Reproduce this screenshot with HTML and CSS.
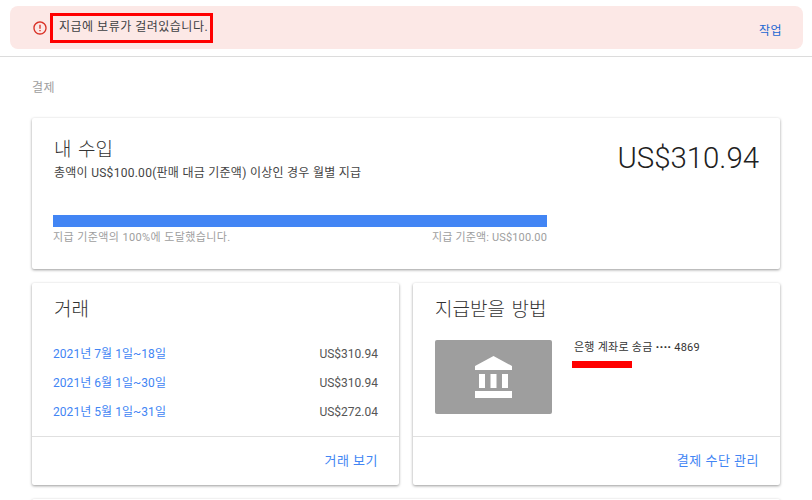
FILE: index.html
```html
<!DOCTYPE html>
<html lang="ko">
<head>
    <meta charset="UTF-8">
    <title>결제</title>
    <link rel="stylesheet" href="styles.css">
</head>
<body>
    <div class="alert-wrap">
        <div class="alert">
            <svg class="alert-icon" viewBox="0 0 24 24" width="16" height="16">
                <path fill="#d93025" d="M11 15h2v2h-2zm0-8h2v6h-2zm1-5C6.47 2 2 6.48 2 12s4.47 10 10 10 10-4.48 10-10S17.52 2 12 2zm0 18c-4.42 0-8-3.58-8-8s3.58-8 8-8 8 3.58 8 8-3.58 8-8 8z"/>
            </svg>
            <span class="alert-text">지급에 보류가 걸려있습니다.</span>
            <a class="alert-action">작업</a>
        </div>
    </div>

    <div class="content">
        <div class="page-title">결제</div>

        <div class="card earnings">
            <div class="earnings-top">
                <div>
                    <h2 class="card-title">내 수입</h2>
                    <p class="earnings-desc">총액이 US$100.00(판매 대금 기준액) 이상인 경우 월별 지급</p>
                </div>
                <div class="balance">US$310.94</div>
            </div>
            <div class="progress">
                <div class="progress-bar"></div>
                <div class="progress-labels">
                    <span>지급 기준액의 100%에 도달했습니다.</span>
                    <span class="threshold">지급 기준액: US$100.00</span>
                </div>
            </div>
        </div>

        <div class="card-row">
            <div class="card half">
                <div class="card-body">
                    <h2 class="card-title">거래</h2>
                    <div class="tx-list">
                        <div class="tx-row"><a class="link">2021년 7월 1일~18일</a><span>US$310.94</span></div>
                        <div class="tx-row"><a class="link">2021년 6월 1일~30일</a><span>US$310.94</span></div>
                        <div class="tx-row"><a class="link">2021년 5월 1일~31일</a><span>US$272.04</span></div>
                    </div>
                </div>
                <div class="card-footer"><a class="link">거래 보기</a></div>
            </div>

            <div class="card half">
                <div class="card-body">
                    <h2 class="card-title">지급받을 방법</h2>
                    <div class="pay-method">
                        <div class="bank-thumb">
                            <svg viewBox="0 0 37 42" width="37" height="42">
                                <path fill="#fff" d="M18.5 0L37 10v4H0v-4zM4 18h6v14H4zM15.5 18h6v14h-6zM27 18h6v14h-6zM0 35h37v7H0z"/>
                            </svg>
                        </div>
                        <div class="bank-info">
                            <div class="bank-name">은행 계좌로 송금 <b>····</b> 4869</div>
                            <div class="redacted"></div>
                        </div>
                    </div>
                </div>
                <div class="card-footer"><a class="link">결제 수단 관리</a></div>
            </div>
        </div>

        <div class="card next-card"></div>
    </div>
</body>
</html>
```

FILE: styles.css
```css
html, body {
    height: 100%;
    overflow: hidden;
}
body {
    margin: 0;
    background-color: #fff;
    color: #444;
    font-family: Roboto, "Noto Sans CJK KR", sans-serif;
    font-size: 12px;
}
a {
    cursor: pointer;
}
.alert-wrap {
    padding: 6px 9px 7px 10px;
    border-bottom: 1px solid #dcdcdc;
}
.alert {
    display: flex;
    align-items: center;
    height: 43px;
    background-color: #fce8e6;
    border-radius: 8px;
    box-sizing: border-box;
    padding: 0 21px 0 22px;
}
.alert-icon {
    flex: none;
    margin-top: 1px;
}
.alert-text {
    margin-left: 2px;
    padding: 3px 2px 5px 6px;
    border: 3px solid #f00;
    color: #3c4043;
    line-height: 16px;
    letter-spacing: 0.5px;
}
.alert-action {
    margin-left: auto;
    margin-top: 4px;
    color: #1a67d2;
    letter-spacing: 0.5px;
}
.content {
    padding: 22px 32px 0;
}
.page-title {
    color: #9e9e9e;
    line-height: 18px;
    margin-bottom: 21px;
    letter-spacing: 0.5px;
}
.card {
    background-color: #fff;
    border-radius: 2px;
    box-shadow: 0 1px 3px rgba(0, 0, 0, 0.4);
}
.earnings {
    height: 151px;
    box-sizing: border-box;
    padding: 19px 21px 0;
}
.earnings-top {
    display: flex;
    justify-content: space-between;
    align-items: flex-start;
    height: 78px;
}
.card-title {
    margin: 1px 0 0 1px;
    font-size: 19px;
    font-weight: 300;
    line-height: 24px;
    color: #333;
    word-spacing: 2px;
}
.earnings-desc {
    margin: 3px 0 0 1px;
    line-height: 16px;
    letter-spacing: 0.27px;
}
.balance {
    margin-top: 1px;
    font-size: 29.4px;
    font-weight: 300;
    line-height: 40px;
    color: #212121;
}
.progress {
    width: 494px;
}
.progress-bar {
    height: 12px;
    background-color: #4285f4;
}
.progress-labels {
    display: flex;
    justify-content: space-between;
    margin-top: 4px;
    font-size: 11px;
    line-height: 14px;
    color: #9e9e9e;
    letter-spacing: 0.4px;
}
.threshold {
    letter-spacing: 0.15px;
}
.card-row {
    display: flex;
    gap: 14px;
    margin-top: 14px;
}
.half {
    flex: 1;
    height: 202px;
    display: flex;
    flex-direction: column;
}
.card-body {
    flex: 1;
    padding: 14px 21px 0 21px;
}
.card-footer {
    height: 44px;
    padding: 0 21px 4px;
    border-top: 1px solid #e0e0e0;
    display: flex;
    align-items: center;
    justify-content: flex-end;
    font-size: 13px;
    letter-spacing: 0.5px;
}
.link {
    color: #4285f4;
}
.tx-row .link {
    letter-spacing: 0.05px;
}
.tx-list {
    margin-top: 24px;
}
.tx-row {
    display: flex;
    justify-content: space-between;
    height: 29px;
    line-height: 16px;
    color: #555;
}
.pay-method {
    display: flex;
    gap: 22px;
    margin-top: 18px;
}
.bank-thumb {
    width: 117px;
    height: 74px;
    margin-left: 1px;
    background-color: #9e9e9e;
    border-radius: 2px;
    display: flex;
    align-items: center;
    justify-content: center;
}
.bank-info {
    padding-top: 1px;
}
.bank-name {
    font-size: 11px;
    line-height: 14px;
    color: #333;
    letter-spacing: 0.25px;
}
.bank-name b {
    font-size: 13px;
    line-height: 0;
    letter-spacing: 0;
}
.redacted {
    width: 60px;
    height: 7px;
    margin-top: 6px;
    margin-left: -2px;
    background-color: #f00;
}
.next-card {
    height: 40px;
    margin-top: 14px;
}
```
